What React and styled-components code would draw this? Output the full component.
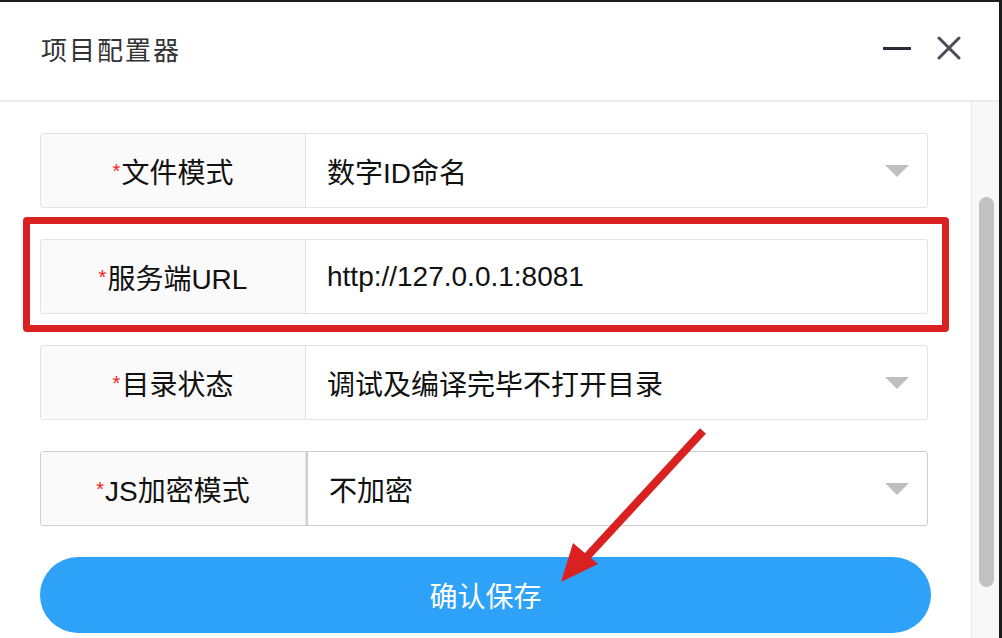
import React from "react";
import styled, { createGlobalStyle } from "styled-components";

const fields = [
  { label: "文件模式", value: "数字ID命名", select: true },
  { label: "服务端URL", value: "http://127.0.0.1:8081", marked: true },
  { label: "目录状态", value: "调试及编译完毕不打开目录", select: true },
  { label: "JS加密模式", value: "不加密", select: true, focused: true },
];

const GlobalStyle = createGlobalStyle`
  html, body {
    margin: 0;
    padding: 0;
    background: #ffffff;
  }
  * {
    box-sizing: border-box;
  }
`;

const Window = styled.div`
  width: 1002px;
  height: 638px;
  display: flex;
  flex-direction: column;
  background: #ffffff;
  border-top: 2px solid #1d1d1f;
  border-right: 3px solid #1a1a1a;
  font-family: "Liberation Sans", "Noto Sans CJK SC", sans-serif;
  overflow: hidden;
`;

const Header = styled.div`
  height: 100px;
  flex-shrink: 0;
  display: flex;
  align-items: center;
  padding: 0 38px 6px 41px;
  border-bottom: 2px solid #ececec;
`;

const Title = styled.div`
  flex: 1;
  font-size: 26px;
  letter-spacing: 2px;
  color: #333333;
  font-family: "Noto Sans CJK SC", sans-serif;
`;

const Controls = styled.div`
  display: flex;
  align-items: center;
  gap: 26px;
`;

const Minimize = styled.div`
  width: 28px;
  height: 3px;
  background: #2b2b3a;
`;

const Body = styled.div`
  flex: 1;
  display: flex;
  min-height: 0;
`;

const Content = styled.div`
  position: relative;
  flex: 1;
  display: flex;
  flex-direction: column;
  gap: 31px;
  padding: 31px 40px 0 40px;
`;

const Row = styled.div`
  position: relative;
  display: flex;
  height: 75px;
  margin-right: 3px;
  border: 1px solid ${(p) => (p.focused ? "#cfcfcf" : "#e3e3e3")};
  border-radius: 3px;
  background: #ffffff;
`;

const Label = styled.div`
  width: 265px;
  flex-shrink: 0;
  display: flex;
  align-items: center;
  justify-content: center;
  background: #fafafa;
  border-right: 1px solid #e3e3e3;
  border-radius: 3px 0 0 3px;
  font-size: 28px;
  color: #111111;
`;

const Star = styled.span`
  color: #ff1a1a;
  font-size: 20px;
  vertical-align: super;
  line-height: 1;
  margin-right: 1px;
`;

const Value = styled.div`
  flex: 1;
  display: flex;
  align-items: center;
  padding: 0 18px 0 21px;
  font-size: 28px;
  color: #111111;
  ${(p) => p.focused && "border-left: 2px solid #cfcfcf;"}
`;

const ValueText = styled.span`
  flex: 1;
`;

const Caret = styled.span`
  width: 0;
  height: 0;
  border-left: 12px solid transparent;
  border-right: 12px solid transparent;
  border-top: 12px solid #bfbfbf;
`;

const Highlight = styled.div`
  position: absolute;
  top: -23px;
  left: -18px;
  right: -22px;
  bottom: -19px;
  border: 7px solid #d92121;
  border-radius: 4px;
  pointer-events: none;
`;

const SaveButton = styled.button`
  height: 76px;
  border: none;
  border-radius: 38px;
  background: #2ea1f8;
  color: #ffffff;
  font-size: 28px;
  font-family: "Noto Sans CJK SC", sans-serif;
  cursor: pointer;
`;

const Arrow = styled.svg`
  position: absolute;
  left: 540px;
  top: 308px;
  pointer-events: none;
`;

const ScrollTrack = styled.div`
  width: 28px;
  flex-shrink: 0;
  background: #f8f8f8;
  border-left: 1px solid #e6e6e6;
  padding: 95px 0 0 7px;
`;

const ScrollThumb = styled.div`
  width: 15px;
  height: 390px;
  border-radius: 8px;
  background: #c1c1c1;
`;

const CloseIcon = () => (
  <svg width="24" height="24" viewBox="0 0 24 24">
    <path d="M2 2 L22 22 M22 2 L2 22" stroke="#4a4a5a" strokeWidth="3" strokeLinecap="round" />
  </svg>
);

export default function App() {
  return (
    <>
      <GlobalStyle />
      <Window>
        <Header>
          <Title>项目配置器</Title>
          <Controls>
            <Minimize />
            <CloseIcon />
          </Controls>
        </Header>
        <Body>
          <Content>
            {fields.map((f) => (
              <Row key={f.label} focused={f.focused}>
                <Label>
                  <Star>*</Star>
                  {f.label}
                </Label>
                <Value focused={f.focused}>
                  <ValueText>{f.value}</ValueText>
                  {f.select && <Caret />}
                </Value>
                {f.marked && <Highlight />}
              </Row>
            ))}
            <SaveButton>确认保存</SaveButton>
            <Arrow width="180" height="190" viewBox="0 0 180 190">
              <line x1="163" y1="21" x2="42" y2="152" stroke="#d92121" strokeWidth="8" />
              <polygon points="21,172 33,133 58,154" fill="#d92121" />
            </Arrow>
          </Content>
          <ScrollTrack>
            <ScrollThumb />
          </ScrollTrack>
        </Body>
      </Window>
    </>
  );
}
